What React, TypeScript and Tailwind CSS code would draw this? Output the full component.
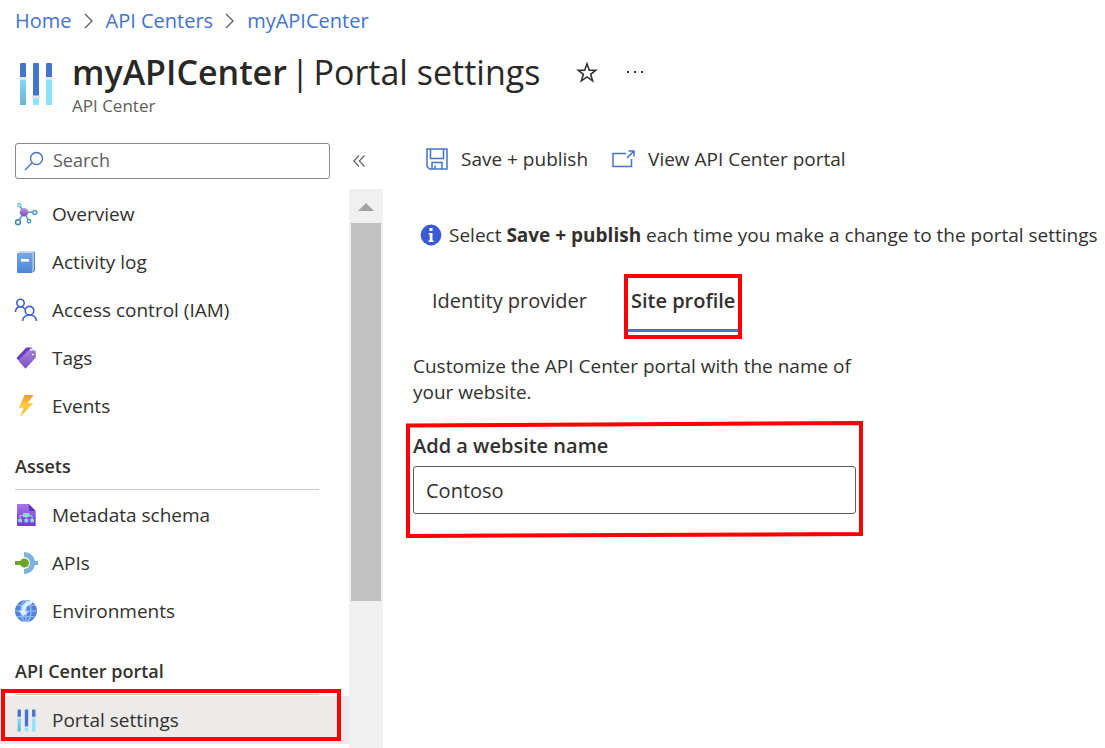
import type { ReactNode } from "react";

function ApiCenterIcon({ className }: { className: string }) {
  return (
    <svg viewBox="0 0 34 44" className={className} preserveAspectRatio="none" aria-hidden="true">
      <defs>
        <linearGradient id="cyanBar" x1="0" y1="0" x2="0" y2="1">
          <stop offset="0" stopColor="#83dcf5" />
          <stop offset="1" stopColor="#6bb3d3" />
        </linearGradient>
      </defs>
      <rect x="1" y="1" width="6" height="15" rx="1" fill="#4574cd" />
      <rect x="1" y="17" width="6" height="26" rx="0.6" fill="url(#cyanBar)" />
      <rect x="0" y="15" width="8" height="3" rx="1" fill="#dfe3ea" />
      <rect x="14" y="1" width="6" height="33" rx="1" fill="#4574cd" />
      <rect x="14" y="36" width="6" height="7" rx="0.6" fill="#8ae3ff" />
      <rect x="13" y="33.500" width="8" height="3" rx="1" fill="#dfe3ea" />
      <rect x="27" y="1" width="6" height="15" rx="1" fill="#4574cd" />
      <rect x="27" y="17" width="6" height="26" rx="0.6" fill="#8ae3ff" />
      <rect x="26" y="15" width="8" height="3" rx="1" fill="#dfe3ea" />
    </svg>
  );
}

function Icon({ children }: { children: ReactNode }) {
  return (
    <svg viewBox="0 0 24 24" className="size-6 shrink-0" fill="none" aria-hidden="true">
      {children}
    </svg>
  );
}

const overviewIcon = (
  <Icon>
    <defs>
      <linearGradient id="hub" x1="0" y1="0" x2="0" y2="1">
        <stop offset="0" stopColor="#b796e4" />
        <stop offset="1" stopColor="#7a4fc0" />
      </linearGradient>
    </defs>
    <g stroke="#4f9fc6" strokeWidth="1.500">
      <path d="M6.200 4.800L8.500 8M14 10.300h4.800M8 14l-3 4M12 14l2 3.500" />
      <circle cx="5.300" cy="3.200" r="1.600" stroke="#76c4dc" />
      <circle cx="20.800" cy="10.500" r="2" />
      <circle cx="15" cy="19.200" r="1.700" />
      <circle cx="4" cy="20.200" r="2.400" stroke="#3f86b3" />
    </g>
    <circle cx="10" cy="10.300" r="4.300" fill="url(#hub)" />
  </Icon>
);

const activityIcon = (
  <Icon>
    <defs>
      <linearGradient id="book" x1="0" y1="0" x2="0" y2="1">
        <stop offset="0" stopColor="#74a9e8" />
        <stop offset="1" stopColor="#4b86d6" />
      </linearGradient>
    </defs>
    <path d="M5 1.200h15.600v20H18V3.500H3.500z" fill="#c9cfdf" />
    <path d="M20.800 1.500v19l-2 2.300V3z" fill="#3b6dba" />
    <path d="M18.600 3.500l1-1v18.300l-1 .8z" fill="#fff" />
    <rect x="3" y="3" width="15.500" height="20" rx="1" fill="url(#book)" />
    <rect x="7" y="9" width="8" height="2.600" fill="#fff" />
  </Icon>
);

const accessIcon = (
  <Icon>
    <g stroke="#3f5fd6" strokeWidth="1.600">
      <circle cx="6.500" cy="5" r="3.700" />
      <circle cx="15.500" cy="12.700" r="4.300" />
      <path d="M1.400 14c.2-3.300 2.300-5.300 5.100-5.300 2 0 3.600.9 4.600 2.400M8.600 23c.4-3.800 3-6 6.900-6s6.600 2.200 7 6" />
    </g>
  </Icon>
);

const tagsIcon = (
  <Icon>
    <defs>
      <linearGradient id="tag" x1="0" y1="0" x2="0" y2="1">
        <stop offset="0" stopColor="#a585dc" />
        <stop offset="1" stopColor="#7a4fbe" />
      </linearGradient>
    </defs>
    <path d="M3 11.500L12.300 1.600h5l.9.900v4L6 15.200 2.600 12.700z" fill="#6e3acb" />
    <path d="M5 13.500L14.600 4.300h5.900l1.300 1.300v5.800L11.500 22.800l-6.500-7.300z" fill="url(#tag)" />
    <circle cx="17" cy="3.600" r="1.200" fill="#fff" />
    <circle cx="18.900" cy="8.500" r="1.500" fill="#fff" stroke="#5f35a8" strokeWidth="0.700" />
  </Icon>
);

const eventsIcon = (
  <Icon>
    <defs>
      <linearGradient id="bolt" x1="0" y1="0" x2="0" y2="1">
        <stop offset="0" stopColor="#ec9b31" />
        <stop offset="0.500" stopColor="#f9cf3f" />
        <stop offset="1" stopColor="#f2ae2e" />
      </linearGradient>
    </defs>
    <path d="M10.500 1h9l-5.700 8.300h5.400L6 23l3.700-9.300H4.800z" fill="url(#bolt)" />
  </Icon>
);

const metadataIcon = (
  <Icon>
    <defs>
      <linearGradient id="sheet" x1="0" y1="0" x2="0" y2="1">
        <stop offset="0" stopColor="#a478ec" />
        <stop offset="1" stopColor="#6f3bd0" />
      </linearGradient>
    </defs>
    <path d="M3 1h12l6.700 7v15H3z" fill="url(#sheet)" />
    <path d="M14.500 1l7.200 7h-6.500z" fill="#5f2fc0" />
    <path d="M12.200 13v5M6 17v-4.500h12V17" stroke="#b9bff0" strokeWidth="1" />
    <rect x="9" y="10" width="6.500" height="4" fill="#8bdcc8" />
    <rect x="4.300" y="16" width="3.700" height="3.300" fill="#8bdcc8" />
    <rect x="10.400" y="16" width="3.700" height="3.300" fill="#8bdcc8" />
    <rect x="16.300" y="16" width="3.700" height="3.300" fill="#8bdcc8" />
  </Icon>
);

const apisIcon = (
  <Icon>
    <path d="M10 1c5.500 0 9.800 3.700 10.800 9H24v4h-3.200c-1 5.300-5.300 9-10.800 9v-5a6 6 0 0 0 0-12z" fill="#7cb3da" />
    <path d="M1 10h5.300a4.600 4.600 0 1 1 0 4H1z" fill="#6fa42a" />
  </Icon>
);

const environmentsIcon = (
  <Icon>
    <circle cx="12" cy="12" r="11" fill="#5282dd" />
    <g stroke="#9cc4f5" strokeWidth="1.100">
      <ellipse cx="12" cy="12" rx="5" ry="10.500" />
      <path d="M12 1v22M1.300 12h21.400M3 6.200h18M3 17.800h18" />
    </g>
    <path d="M12.500 2.500L20 1.300 17.500 5c-4.300 1.200-6.300 4.200-6 7.800l3.500-.3-5.500 4.700-5.300-5.700 3.200.4c.4-4.200 2-7.400 5.100-9.400z" fill="#d8f0ff" />
  </Icon>
);

const portalIcon = (
  <span className="flex size-6 shrink-0 items-center justify-center">
    <ApiCenterIcon className="h-[23px] w-[19px]" />
  </span>
);

type Item = { label: string; icon: ReactNode; current?: boolean };

const groups: { title?: string; items: Item[] }[] = [
  {
    items: [
      { label: "Overview", icon: overviewIcon },
      { label: "Activity log", icon: activityIcon },
      { label: "Access control (IAM)", icon: accessIcon },
      { label: "Tags", icon: tagsIcon },
      { label: "Events", icon: eventsIcon },
    ],
  },
  {
    title: "Assets",
    items: [
      { label: "Metadata schema", icon: metadataIcon },
      { label: "APIs", icon: apisIcon },
      { label: "Environments", icon: environmentsIcon },
    ],
  },
  {
    title: "API Center portal",
    items: [{ label: "Portal settings", icon: portalIcon, current: true }],
  },
];

function NavItem({ label, icon, current }: Item) {
  return (
    <li className="relative">
      <a
        href="#"
        aria-current={current ? "page" : undefined}
        className={
          current
            ? "flex h-12 items-center gap-[14px] bg-[#edebe9] pl-[14px]"
            : "flex h-12 items-center gap-[14px] pl-[14px]"
        }
      >
        {icon}
        {label}
      </a>
      {current && (
        <span className="pointer-events-none absolute -top-[7px] right-2 bottom-[3px] left-px border-4 border-[#ff0000]" />
      )}
    </li>
  );
}

function Chevron() {
  return (
    <svg viewBox="0 0 10 16" className="h-4 w-[10px]" fill="none" stroke="#605e5c" strokeWidth="1.300" aria-hidden="true">
      <path d="M1 1l7 7-7 7" />
    </svg>
  );
}

function ScrollTrack() {
  return (
    <div className="flex w-[34px] shrink-0 flex-col items-center bg-[#f0f0f0]">
      <div className="flex h-[34px] items-center justify-center pt-[2px]">
        <svg viewBox="0 0 16 8" className="h-2 w-4" fill="#a3a3a3" aria-hidden="true">
          <path d="M8 0l8 8H0z" />
        </svg>
      </div>
      <div className="h-[378px] w-[30px] bg-[#c1c1c1]" />
    </div>
  );
}

export default function App() {
  return (
    <div className="flex min-h-screen flex-col bg-white font-['Open_Sans','Noto_Sans',sans-serif] text-[19px] leading-[26px] text-[#323130]">
      <header>
        <nav aria-label="Breadcrumb" className="flex items-center gap-3 pt-2 pl-[15px] text-[20px] text-[#4574cd]">
          <a href="#">Home</a>
          <Chevron />
          <a href="#">API Centers</a>
          <Chevron />
          <a href="#">myAPICenter</a>
        </nav>
        <div className="flex pt-4 pl-[19px]">
          <ApiCenterIcon className="mt-3 mr-[19px] h-11 w-[34px]" />
          <div>
            <div className="flex items-center">
              <h1 className="flex gap-1 text-[34px] leading-[44px] text-[#292827]">
                <span className="font-semibold">myAPICenter</span> <span>|</span> <span>Portal settings</span>
              </h1>
              <button type="button" aria-label="Add to favorites" className="ml-9">
                <svg viewBox="0 0 22 22" className="size-[22px]" fill="none" stroke="#323130" strokeWidth="1.600" aria-hidden="true">
                  <path d="M11 2.800l2.300 6.400h6.600l-5.300 4.100 2 6.500L11 15.900l-5.600 3.900 2-6.500-5.300-4.100h6.600z" />
                </svg>
              </button>
              <button type="button" aria-label="More actions" className="ml-7">
                <svg viewBox="0 0 18 4" className="h-1 w-[18px]" fill="#323130" aria-hidden="true">
                  <path d="M1 1h2v2H1zM8 1h2v2H8zM15 1h2v2h-2z" />
                </svg>
              </button>
            </div>
            <p className="text-[17px] leading-6 text-[#605e5c]">API Center</p>
          </div>
        </div>
      </header>

      <div className="flex flex-1 pt-[25px]">
        <aside className="flex w-[383px] shrink-0 flex-col">
          <div className="flex items-center pl-[15px]">
            <label className="flex h-9 w-[315px] items-center gap-[9px] rounded-[3px] border border-[#8a8886] pl-2">
              <svg viewBox="0 0 20 20" className="size-5 shrink-0" fill="none" stroke="#4574cd" strokeWidth="1.400" aria-hidden="true">
                <circle cx="12.500" cy="7.500" r="6" />
                <path d="M8.200 11.800L1 19" />
              </svg>
              <input
                type="search"
                aria-label="Search"
                placeholder="Search"
                className="w-full min-w-0 bg-transparent pb-[2px] text-[18px] outline-none placeholder:text-[#605e5c]"
              />
            </label>
            <button type="button" aria-label="Collapse menu" className="ml-[23px]">
              <svg viewBox="0 0 12 12" className="size-3" fill="none" stroke="#605e5c" strokeWidth="1.100" aria-hidden="true">
                <path d="M6 0.500L0.800 6 6 11.500M11.500 0.500L6.300 6l5.200 5.500" />
              </svg>
            </button>
          </div>
          <div className="mt-[10px] flex flex-1">
            <nav aria-label="Resource menu" className="flex-1 pt-px">
              {groups.map((group, i) => (
                <section key={i}>
                  {group.title && (
                    <h2 className="mr-[30px] mb-px ml-[15px] flex h-[60px] items-center border-b border-[#c8c6c4] pt-3 text-[18px] font-semibold">
                      {group.title}
                    </h2>
                  )}
                  <ul>
                    {group.items.map((item) => (
                      <NavItem key={item.label} {...item} />
                    ))}
                  </ul>
                </section>
              ))}
            </nav>
            <ScrollTrack />
          </div>
        </aside>

        <main className="min-w-0 flex-1 pt-[3px] pl-[30px]">
          <div className="flex items-center gap-6 pl-[13px]">
            <button type="button" className="flex items-center gap-[13px]">
              <svg viewBox="0 0 22 22" className="size-[22px]" fill="none" stroke="#4574cd" strokeWidth="1.500" aria-hidden="true">
                <path d="M1 1h20v20H3.500L1 18.500zM4.500 1v9.500h13V1M6 21v-6.500h10V21M9 17.500V21" />
              </svg>
              Save + publish
            </button>
            <button type="button" className="flex items-center gap-[13px]">
              <svg viewBox="0 0 23 18" className="h-[18px] w-[23px]" fill="none" stroke="#4574cd" strokeWidth="1.500" aria-hidden="true">
                <path d="M14 3.500H1v13h18.500V9M15 8L22 1M16.500 1H22v5.500" />
              </svg>
              View API Center portal
            </button>
          </div>

          <div className="mt-[50px] flex items-center gap-[7px] pl-[7px] whitespace-nowrap">
            <svg viewBox="0 0 22 22" className="size-[22px] shrink-0" aria-hidden="true">
              <circle cx="11" cy="11" r="10.400" fill="#3b5bd6" />
              <path d="M9.500 4h3v3h-3zM8.700 9h3.800v7.500h1.200V18H8.500v-1.500h1.200v-6h-1z" fill="#fff" />
            </svg>
            <p>
              Select <strong className="font-bold">Save + publish</strong> each time you make a change to the portal settings
            </p>
          </div>

          <div role="tablist" className="mt-[26px] flex pl-[19px] text-[20px]">
            <button type="button" role="tab" aria-selected="false" className="h-[65px] pb-3">
              Identity provider
            </button>
            <button
              type="button"
              role="tab"
              aria-selected="true"
              className="ml-[37px] flex h-[65px] flex-col border-4 border-[#ff0000] pb-[3px] font-semibold"
            >
              <span className="flex flex-1 items-center border-b-[3px] border-[#4574cd] px-[3px] pb-[5px]">Site profile</span>
            </button>
          </div>

          <p className="mt-[14px] max-w-[443px]">
            Customize the API Center portal with the name of your website.
          </p>

          <div className="relative mt-7 w-[443px] max-w-full text-[20px]">
            <label htmlFor="site-name" className="block font-semibold">
              Add a website name
            </label>
            <input
              id="site-name"
              defaultValue="Contoso"
              className="mt-[7px] block h-12 w-full rounded-[3px] border border-[#605e5c] px-3 pt-px outline-none"
            />
            <svg
              viewBox="0 0 457 117"
              className="pointer-events-none absolute -top-3 -left-[7px] h-[117px] w-[457px]"
              fill="none"
              stroke="#ff0000"
              strokeWidth="4"
              aria-hidden="true"
            >
              <path d="M2 4.500L455 2v111L2 115z" />
            </svg>
          </div>
        </main>
      </div>
    </div>
  );
}
